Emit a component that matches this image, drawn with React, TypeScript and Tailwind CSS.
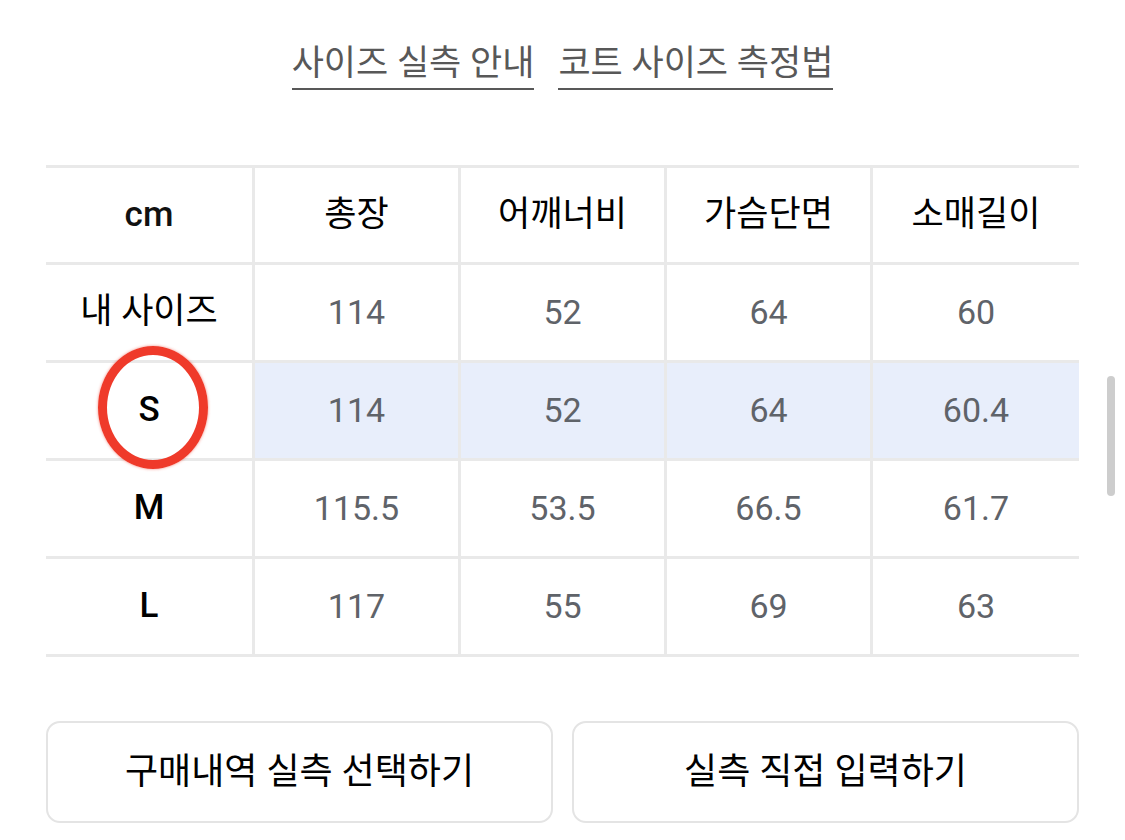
import React from "react";

const columns = ["총장", "어깨너비", "가슴단면", "소매길이"];

const rows = [
  { label: "내 사이즈", values: ["114", "52", "64", "60"] },
  { label: "S", values: ["114", "52", "64", "60.4"], selected: true },
  { label: "M", values: ["115.5", "53.5", "66.5", "61.7"] },
  { label: "L", values: ["117", "55", "69", "63"] },
];

const font = { fontFamily: 'Roboto, "Noto Sans CJK KR", sans-serif' };

export default function App() {
  return (
    <div className="relative w-[1125px] h-[840px] bg-white overflow-hidden" style={font}>
      {/* Guide links */}
      <div className="flex justify-center gap-[24px] pt-[43px]">
        <span className="text-[35px] leading-[42px] text-[#585858] border-b-2 border-[#585858] pb-[3px]">
          사이즈 실측 안내
        </span>
        <span className="text-[35px] leading-[42px] text-[#585858] border-b-2 border-[#585858] pb-[3px]">
          코트 사이즈 측정법
        </span>
      </div>

      {/* Size table */}
      <div className="mx-[46px] mt-[75px] border-t-[3px] border-[#e9e9e9]">
        <div className="grid grid-cols-[209px_repeat(4,1fr)] h-[97px] border-b-[3px] border-[#e9e9e9]">
          <div className="flex items-center justify-center border-r-[3px] border-[#e9e9e9] text-[35px] font-medium text-[#111]">
            cm
          </div>
          {columns.map((c, i) => (
            <div
              key={c}
              className={`flex items-center justify-center text-[35px] text-black ${
                i < columns.length - 1 ? "border-r-[3px] border-[#e9e9e9]" : ""
              }`}
            >
              {c}
            </div>
          ))}
        </div>

        {rows.map((row) => (
          <div
            key={row.label}
            className="grid grid-cols-[209px_repeat(4,1fr)] h-[98px] border-b-[3px] border-[#e9e9e9]"
          >
            <div
              className={`relative flex items-center justify-center border-r-[3px] border-[#e9e9e9] text-[35px] text-black ${
                row.label.length === 1 ? "font-medium" : ""
              }`}
            >
              {row.label}
              {row.selected && (
                <div className="absolute left-[52px] top-[-17px] w-[110px] h-[123px] rounded-[50%] border-[9px] border-[#ef3a2a] shadow-[0_0_3px_rgba(239,58,42,0.6)]" />
              )}
            </div>
            {row.values.map((v, i) => (
              <div
                key={i}
                className={`flex items-center justify-center text-[34px] text-[#5f6369] ${
                  row.selected ? "bg-[#e8eefb]" : ""
                } ${i < row.values.length - 1 ? "border-r-[3px] border-[#e9e9e9]" : ""}`}
              >
                {v}
              </div>
            ))}
          </div>
        ))}
      </div>

      {/* Action buttons */}
      <div className="grid grid-cols-2 gap-[19px] mx-[46px] mt-[64px]">
        <button className="h-[102px] rounded-[14px] border-2 border-[#e4e4e4] bg-white text-[36px] text-black">
          구매내역 실측 선택하기
        </button>
        <button className="h-[102px] rounded-[14px] border-2 border-[#e4e4e4] bg-white text-[36px] text-black">
          실측 직접 입력하기
        </button>
      </div>

      {/* Scrollbar thumb */}
      <div className="absolute left-[1107px] top-[376px] w-[8px] h-[120px] rounded-full bg-[#cdcdcd]" />
    </div>
  );
}
